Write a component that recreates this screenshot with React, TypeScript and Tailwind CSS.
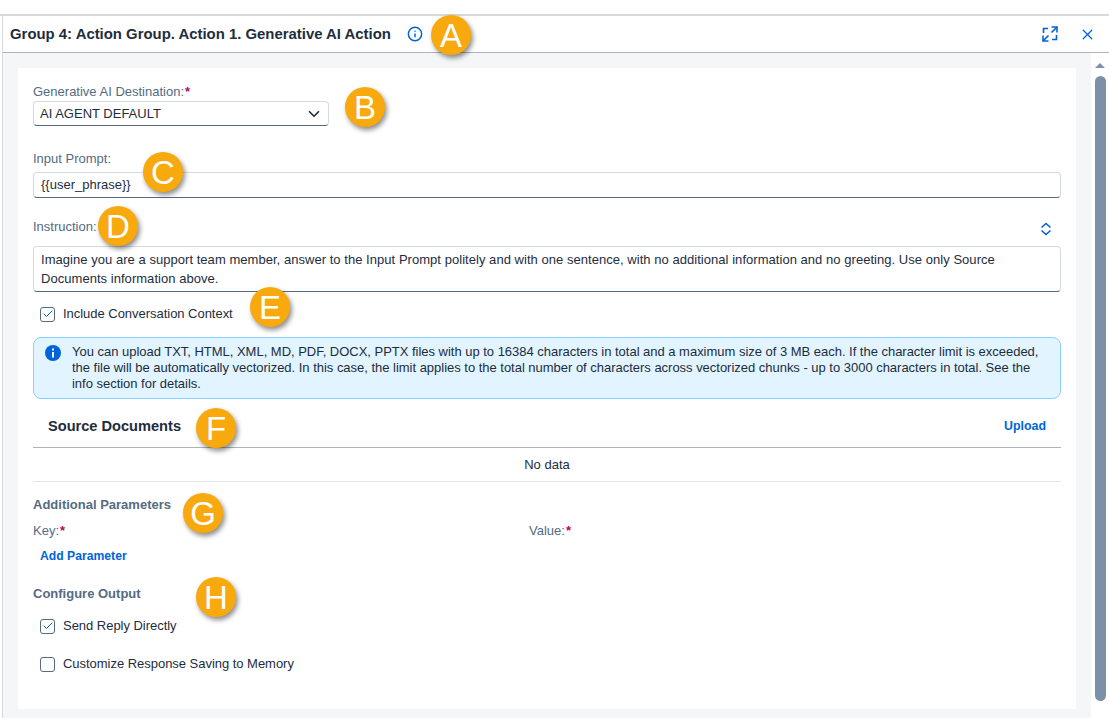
import React from 'react';
import { ChevronDown, X, Check, Info } from 'lucide-react';

const Badge = ({ letter, className }: { letter: string; className: string }) => (
  <div
    className={`absolute w-10 h-10 rounded-full bg-[#f8a90d] text-white text-[33px] leading-none flex items-center justify-center shadow-[2px_3px_5px_rgba(0,0,0,0.45)] ${className}`}
  >
    {letter}
  </div>
);

const CheckBox = ({ checked, label, className }: { checked?: boolean; label: string; className: string }) => (
  <div className={`flex items-center h-[22px] pl-[7px] ${className}`}>
    <div className="w-[15px] h-[15px] rounded-[3px] border border-[#556b82] bg-white flex items-center justify-center">
      {checked && <Check size={12} strokeWidth={2} className="text-[#0064d9]" />}
    </div>
    <span className="ml-2 text-[#1d2d3e] tracking-[-0.03px]">{label}</span>
  </div>
);

const Label = ({ text, required }: { text: string; required?: boolean }) => (
  <span className="text-[#556b82]">
    {text}
    {required && <span className="text-[#c0006e] font-bold ml-[1px]">*</span>}
  </span>
);

const App: React.FC = () => {
  return (
    <div className="relative w-full h-screen overflow-hidden bg-white flex flex-col text-[13px] text-[#1d2d3e] font-['Liberation_Sans',sans-serif]">
      <div className="h-[14px] shrink-0 border-b-2 border-[#d9d9d9] box-content" />

      <div className="flex-1 flex flex-col ml-[2px] border-l border-[#d9d9d9] min-h-0">
        {/* header */}
        <div className="h-[37px] shrink-0 flex items-center border-b border-[#a9b4be] pl-[7px]">
          <span className="text-[14.9px] font-bold">Group 4: Action Group. Action 1. Generative AI Action</span>
          <Info size={16} strokeWidth={2.2} className="text-[#0064d9] ml-4" />
          <div className="ml-auto flex items-center text-[#0064d9]">
            <svg width="16" height="16" viewBox="0 0 16 16" fill="none" stroke="currentColor" strokeWidth="1.6">
              <path d="M1.5 7V2.5h4.5M14.5 9v4.5H10M9.5 1H15v5.5M6.5 15H1V9.5" />
              <path d="M15 1L9.5 6.5M1 15l5.5-5.5" />
            </svg>
            <X size={17} strokeWidth={1.8} className="ml-[21px] mr-[13px]" />
          </div>
        </div>

        <div className="flex-1 flex min-h-0">
          {/* body */}
          <div className="flex-1 bg-[#f5f6f7] pt-[15px] pl-[15px] pr-[15px] pb-[9px]">
            <div className="relative h-full bg-white pt-[14px] px-[15px]">
              <div className="h-[19px] flex items-center">
                <Label text="Generative AI Destination:" required />
              </div>
              <div className="w-[296px] h-[25px] flex items-center justify-between pl-[6px] pr-[5px] rounded-[4px] border border-[#d5dadd] border-b-[#556b82]">
                <span>AI AGENT DEFAULT</span>
                <ChevronDown size={18} strokeWidth={2.2} />
              </div>

              <div className="mt-[23px] h-[19px] flex items-center">
                <Label text="Input Prompt:" />
              </div>
              <div className="mt-1 h-[26px] flex items-center pl-[7px] rounded-[4px] border border-[#d5dadd] border-b-[#556b82]">
                {'{{user_phrase}}'}
              </div>

              <div className="mt-[19px] h-[19px] flex items-center justify-between pr-[8px]">
                <Label text="Instruction:" />
                <svg width="14" height="14" viewBox="0 0 14 14" fill="none" stroke="#0064d9" strokeWidth="1.6" className="mt-[5px]">
                  <path d="M2.5 5.5L7 1.5l4.5 4M2.5 8.5L7 12.5l4.5-4" />
                </svg>
              </div>
              <div className="mt-[10px] h-[46px] pl-[7px] pr-2 pt-[3px] leading-[19px] tracking-[0.04px] rounded-[4px] border border-[#d5dadd] border-b-[#556b82]">
                Imagine you are a support team member, answer to the Input Prompt politely and with one sentence, with no additional information and no greeting. Use only Source Documents information above.
              </div>

              <CheckBox checked label="Include Conversation Context" className="mt-[11px]" />

              <div className="mt-[12px] h-[62px] flex rounded-[8px] border border-[#89d1ff] bg-[#e1f4ff] pl-[11px] pr-2 pt-[6px] leading-4">
                <svg width="16" height="16" viewBox="0 0 16 16" className="shrink-0 mt-[1px]">
                  <circle cx="8" cy="8" r="8" fill="#0064d9" />
                  <rect x="7" y="7" width="2" height="5.5" fill="#fff" />
                  <rect x="7" y="3.5" width="2" height="2" fill="#fff" />
                </svg>
                <span className="ml-[11px] tracking-[-0.02px]">
                  You can upload TXT, HTML, XML, MD, PDF, DOCX, PPTX files with up to 16384 characters in total and a maximum size of 3 MB each. If the character limit is exceeded, the file will be automatically vectorized. In this case, the limit applies to the total number of characters across vectorized chunks - up to 3000 characters in total. See the info section for details.
                </span>
              </div>

              <div className="h-[49px] flex items-center justify-between pl-[15px] pr-[15px] pt-[8px] border-b border-[#a9b4be]">
                <span className="text-[14.6px] font-bold">Source Documents</span>
                <span className="text-[12.4px] font-bold text-[#0064d9] -mt-[2px]">Upload</span>
              </div>
              <div className="h-[34px] flex items-center justify-center border-b border-[#e5e5e5]">No data</div>

              <div className="mt-[14px] h-[18px] flex items-center font-bold text-[#556b82]">Additional Parameters</div>
              <div className="mt-[7px] h-[18px] grid grid-cols-[496px_1fr] items-center">
                <Label text="Key:" required />
                <Label text="Value:" required />
              </div>
              <div className="mt-[7px] h-5 flex items-center pl-[7px] text-[12.2px] font-bold text-[#0064d9]">Add Parameter</div>

              <div className="mt-[19px] h-[18px] flex items-center font-bold text-[#556b82]">Configure Output</div>
              <CheckBox checked label="Send Reply Directly" className="mt-[12px]" />
              <CheckBox label="Customize Response Saving to Memory" className="mt-4" />
            </div>
          </div>

          {/* scrollbar */}
          <div className="w-[18px] shrink-0 flex flex-col items-center pt-[10px]">
            <div className="w-0 h-0 border-x-[5px] border-x-transparent border-b-[5px] border-b-[#7b91a8]" />
            <div className="w-[11px] h-[625px] mt-[8px] rounded-full bg-[#7b91a8]" />
          </div>
        </div>
      </div>

      {/* callouts */}
      <Badge letter="A" className="left-[431px] top-[15px]" />
      <Badge letter="B" className="left-[345px] top-[87px]" />
      <Badge letter="C" className="left-[143px] top-[152px]" />
      <Badge letter="D" className="left-[98px] top-[206px]" />
      <Badge letter="E" className="left-[250px] top-[287px]" />
      <Badge letter="F" className="left-[196px] top-[408px]" />
      <Badge letter="G" className="left-[183px] top-[493px]" />
      <Badge letter="H" className="left-[196px] top-[577px]" />
    </div>
  );
};

export default App;
